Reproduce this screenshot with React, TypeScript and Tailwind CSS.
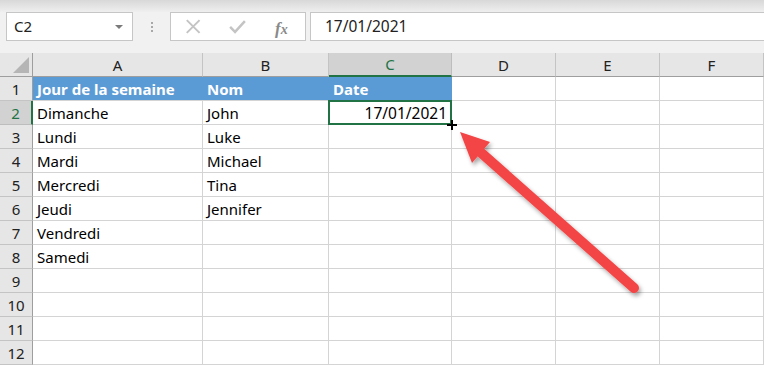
import React from "react";

const cols = ["A", "B", "C", "D", "E", "F"];
const data: string[][] = [
  ["Jour de la semaine", "Nom", "Date"],
  ["Dimanche", "John", "17/01/2021"],
  ["Lundi", "Luke", ""],
  ["Mardi", "Michael", ""],
  ["Mercredi", "Tina", ""],
  ["Jeudi", "Jennifer", ""],
  ["Vendredi", "", ""],
  ["Samedi", "", ""],
  ["", "", ""],
  ["", "", ""],
  ["", "", ""],
  ["", "", ""],
];

export default function App() {
  return (
    <div
      className="relative w-[764px] h-[366px] overflow-hidden bg-white text-black"
      style={{ fontFamily: "'Noto Sans', 'Open Sans', sans-serif" }}
    >
      <div className="h-[12px] bg-gradient-to-b from-[#d8d8d8] to-[#efefef]" />
      <div className="h-[41px] bg-[#f1f1f1] pt-0">
        <div className="flex h-[29px] items-stretch">
          <div className="ml-[6px] w-[127px] border border-[#c6c6c6] bg-white flex items-center justify-between pl-[7px] pr-[9px]">
            <span className="text-[15px] leading-none text-[#222]">C2</span>
            <span className="w-0 h-0 border-l-[4px] border-r-[4px] border-t-[4px] border-l-transparent border-r-transparent border-t-[#7a7a7a]" />
          </div>
          <div className="w-[37px] flex flex-col items-center justify-center gap-[2px]">
            <span className="w-[2px] h-[2px] bg-[#a8a8a8]" />
            <span className="w-[2px] h-[2px] bg-[#a8a8a8]" />
            <span className="w-[2px] h-[2px] bg-[#a8a8a8]" />
          </div>
          <div className="w-[136px] border border-[#c6c6c6] bg-white flex items-center">
            <svg width="136" height="27" viewBox="0 0 136 27">
              <path d="M16 7 L29 20 M29 7 L16 20" stroke="#c4c4c4" strokeWidth="2" fill="none" />
              <path d="M60 14 L65 19 L75 8" stroke="#c4c4c4" strokeWidth="2.5" fill="none" />
            </svg>
          </div>
          <div className="w-[4px]" />
          <div className="flex-1 border border-[#c6c6c6] border-r-0 bg-white flex items-center pl-[14px]">
            <span className="text-[15.5px] leading-none text-[#222]">17/01/2021</span>
          </div>
        </div>
      </div>
      <span
        className="absolute left-[275px] top-[16px] text-[17px] italic font-bold text-[#8a8a8a]"
        style={{ fontFamily: "'Liberation Serif', serif" }}
      >
        f<span className="text-[14px]">x</span>
      </span>

      <div className="grid grid-cols-[33px_170px_126px_123px_104px_104px_104px]">
        {/* header row */}
        <div className="h-[24px] bg-[#e6e6e6] border-r border-b border-[#9e9e9e] relative">
          <svg className="absolute right-[3px] bottom-[3px]" width="16" height="16">
            <polygon points="16,0 16,16 0,16" fill="#b5b5b5" />
          </svg>
        </div>
        {cols.map((c) =>
          c === "C" ? (
            <div
              key={c}
              className="h-[24px] bg-[#d2d2d2] border-r border-[#bdbdbd] border-b-2 border-b-[#217346] flex items-center justify-center pt-[1px] text-[15px] text-[#217346]"
            >
              {c}
            </div>
          ) : (
            <div
              key={c}
              className="h-[24px] bg-[#e6e6e6] border-r border-[#c4c4c4] border-b border-b-[#9e9e9e] flex items-center justify-center pt-[1px] text-[15px] text-[#222]"
            >
              {c}
            </div>
          )
        )}
        {data.map((row, r) => (
          <React.Fragment key={r}>
            <div
              className={
                r === 1
                  ? "h-[24px] bg-[#d2d2d2] border-r-2 border-r-[#217346] border-b border-b-[#bdbdbd] flex items-center justify-center pt-[1px] text-[15px] text-[#217346]"
                  : "h-[24px] bg-[#e6e6e6] border-r border-r-[#9e9e9e] border-b border-b-[#c4c4c4] flex items-center justify-center pt-[1px] text-[15px] text-[#222]"
              }
            >
              {r + 1}
            </div>
            {cols.map((c, ci) => {
              const v = ci < 3 ? row[ci] : "";
              if (r === 0 && ci < 3) {
                return (
                  <div
                    key={c}
                    className="h-[24px] bg-[#5b9bd5] border-b border-[#d4d4d4] flex items-center pl-[4px] pt-[2px] text-[15px] font-bold text-white whitespace-nowrap"
                  >
                    {v}
                  </div>
                );
              }
              if (r === 1 && ci === 2) {
                return (
                  <div
                    key={c}
                    className="relative h-[24px] border-r border-b border-[#d4d4d4] flex items-center justify-end pr-[4px] pt-[2px] text-[15.5px] whitespace-nowrap"
                  >
                    <div className="absolute left-[-1px] top-[-1px] right-[-1px] bottom-[-1px] border-2 border-[#217346]" />
                    <span className="relative">{v}</span>
                  </div>
                );
              }
              return (
                <div
                  key={c}
                  className="h-[24px] border-r border-b border-[#d4d4d4] flex items-center pl-[4px] pt-[2px] text-[15px] whitespace-nowrap overflow-hidden"
                >
                  {v}
                </div>
              );
            })}
          </React.Fragment>
        ))}
      </div>

      <svg className="absolute left-0 top-0 pointer-events-none" width="764" height="366">
        <defs>
          <filter id="sh" x="-20%" y="-20%" width="140%" height="140%">
            <feDropShadow dx="2" dy="3" stdDeviation="2" floodColor="#000" floodOpacity="0.35" />
          </filter>
        </defs>
        <path d="M447 125 H457 M452 120 V130" stroke="#000" strokeWidth="2" />
        <g filter="url(#sh)">
          <line x1="634" y1="288" x2="478" y2="150" stroke="#f34545" strokeWidth="10" strokeLinecap="round" />
          <polygon points="460,132 490,142 472,163" fill="#f34545" />
        </g>
      </svg>
    </div>
  );
}
